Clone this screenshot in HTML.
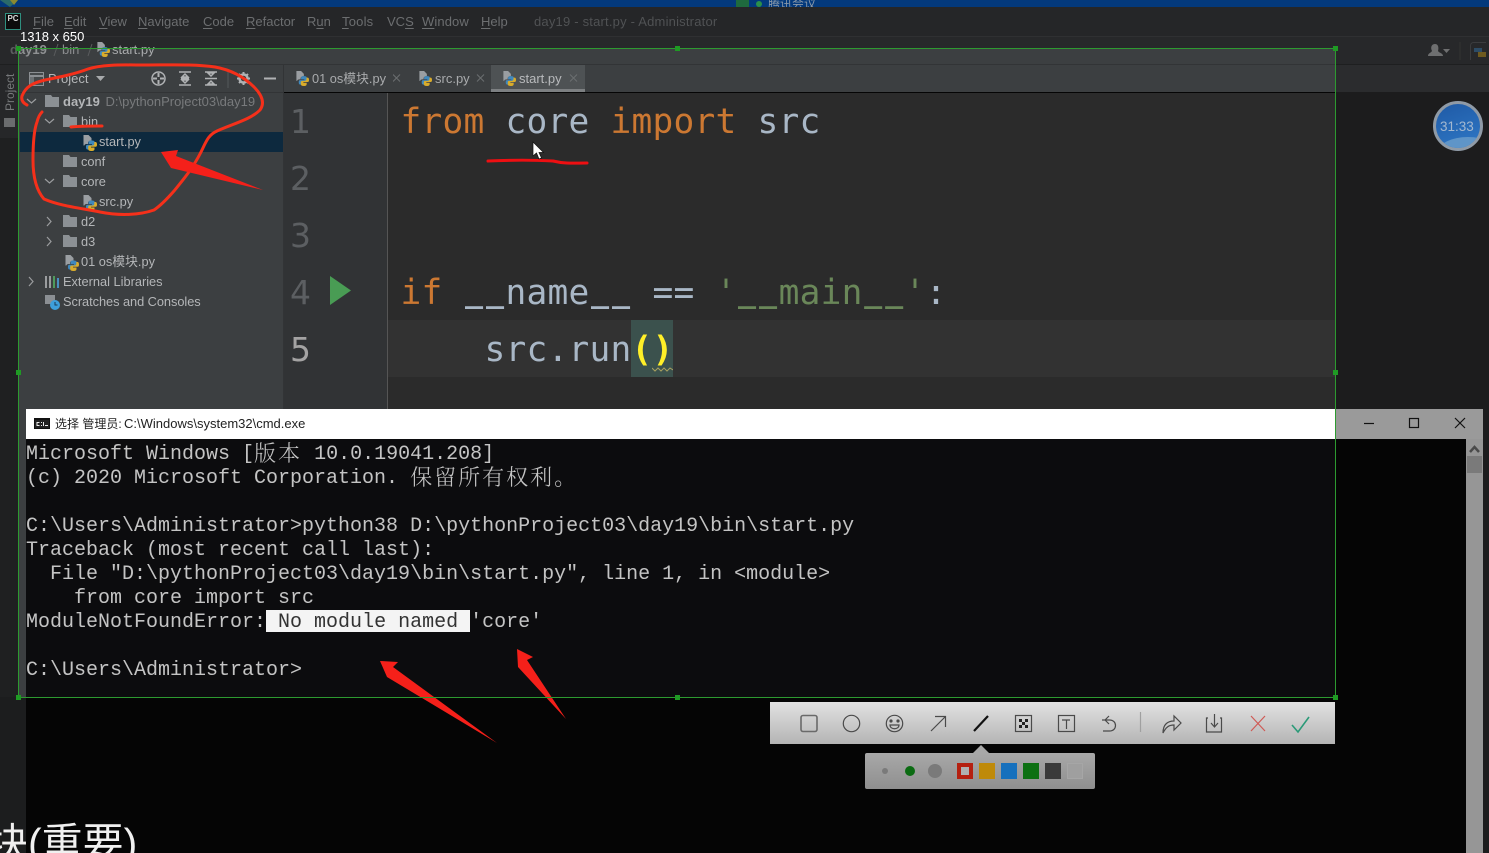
<!DOCTYPE html>
<html><head><meta charset="utf-8">
<style>
html,body{margin:0;padding:0;background:#050505;}
#r{position:relative;width:1489px;height:853px;overflow:hidden;background:#050505;font-family:"Liberation Sans","Noto Sans CJK SC",sans-serif;}
.a{position:absolute;}
.t{position:absolute;white-space:pre;}
.m{font-size:13px;color:#6c6e70;top:14px;line-height:16px;}
.m u{text-decoration-thickness:1px;text-underline-offset:2px;}
.tr{font-size:12.800px;color:#b4b6b8;line-height:20px;}
.code{font-family:"DejaVu Sans Mono","Liberation Mono",monospace;font-size:34.500px;line-height:57px;height:57px;color:#a9b7c6;letter-spacing:.23px;}
.code b{font-weight:normal;color:#cc7832;}
.code s{text-decoration:none;display:inline-block;width:21px;text-align:center;font-size:30px;line-height:1;font-weight:bold;position:relative;top:-2px;letter-spacing:0;}
.ln{font-family:"DejaVu Sans",sans-serif;font-size:33px;line-height:57px;color:#5c5f62;left:290px;}
.c{font-family:"Liberation Mono","Noto Serif CJK SC",monospace;font-size:20px;line-height:24px;height:24px;color:#c4c4c4;left:26px;}
.c i{font-style:normal;font-family:"Noto Serif CJK SC",serif;font-size:22px;letter-spacing:2px;line-height:0;font-weight:300;position:relative;top:2px;}
.h{position:absolute;width:5px;height:5px;background:#1f9a24;}
.sq{position:absolute;top:763px;width:16px;height:16px;}
</style></head><body><div id="r">
<svg width="0" height="0" style="position:absolute"><defs>
<symbol id="py" viewBox="0 0 15 16"><path d="M1.500 0h5l3 3v2.500c-2 0-3.500 1-3.500 2.500v1H4.500c-1 0-1.800.5-2.200 1.500H1.500z" fill="#9a9ea2"/><path d="M9.500 5.500c-2.200 0-3 .7-3 2v1.500H10v.7H5.500C4.200 9.700 4 10.700 4 12c0 1.500.5 2.500 1.500 2.500h1.200v-1.700c0-1 .8-1.800 1.800-1.800h3c.8 0 1.300-.6 1.300-1.300V7.500c0-1.300-1-2-3-2z" fill="#3f88bd"/><path d="M9.500 16c2.200 0 3-.7 3-2v-1.500H9v-.7h4.500c1.300 0 1.500-1 1.500-2.300 0-1.500-.5-2.500-1.500-2.500h-1.200v1.700c0 1-.8 1.800-1.800 1.800h-3c-.8 0-1.300.6-1.300 1.300V14c0 1.300 1 2 3 2z" fill="#d9ac2b"/></symbol>
<symbol id="fd" viewBox="0 0 14 12"><path d="M0 0h6l1.500 2H14v10H0z" fill="#8b9094"/></symbol>
</defs></svg>

<!-- top dim bars -->
<div class="a" style="left:0;top:0;width:1489px;height:7px;background:#03397c"></div>
<svg class="a" style="left:0;top:0" width="20" height="7"><path d="M0 0h18L10 7z" fill="#2a6a6a"/><path d="M10 0h8l-4 5z" fill="#8a8a30"/></svg>
<div class="a" style="left:736px;top:0;width:13px;height:7px;background:#1f6a3e"></div>
<div class="a" style="left:756px;top:1px;width:6px;height:6px;border-radius:3px;background:#2b8f4a"></div>
<div class="t" style="left:768px;top:-3px;font-size:12px;line-height:14px;color:#8a98a8">腾讯会议</div>
<div class="a" style="left:0;top:7px;width:1489px;height:29px;background:#252628"></div>
<div class="a" style="left:0;top:36px;width:1489px;height:1px;background:#2f3032"></div>
<div class="a" style="left:0;top:37px;width:1489px;height:28px;background:#27282a"></div>
<div class="a" style="left:0;top:64px;width:1489px;height:1px;background:#1e1f20"></div>
<div class="a" style="left:1335px;top:65px;width:154px;height:27px;background:#2b2c2e"></div>
<div class="a" style="left:1335px;top:92px;width:154px;height:761px;background:#1c1c1d"></div>
<div class="a" style="left:0;top:65px;width:19px;height:788px;background:#1f2021"></div>
<div class="a" style="left:0;top:65px;width:19px;height:73px;background:#262729"></div>

<!-- PC logo + menu -->
<div class="a" style="left:5px;top:13px;width:14px;height:15px;background:#0c0c0c;border:1px solid #2f8f7f;color:#d8d8d8;font:bold 8px/10px 'Liberation Sans',sans-serif;text-align:center">PC</div>
<div class="t m" style="left:33px"><u>F</u>ile</div>
<div class="t m" style="left:64px"><u>E</u>dit</div>
<div class="t m" style="left:99px"><u>V</u>iew</div>
<div class="t m" style="left:138px"><u>N</u>avigate</div>
<div class="t m" style="left:203px"><u>C</u>ode</div>
<div class="t m" style="left:246px"><u>R</u>efactor</div>
<div class="t m" style="left:307px">R<u>u</u>n</div>
<div class="t m" style="left:342px;letter-spacing:.2px"><u>T</u>ools</div>
<div class="t m" style="left:387px">VC<u>S</u></div>
<div class="t m" style="left:422px;letter-spacing:.1px"><u>W</u>indow</div>
<div class="t m" style="left:481px"><u>H</u>elp</div>
<div class="t m" style="left:534px;color:#505254;letter-spacing:.2px">day19 - start.py - Administrator</div>

<!-- right nav dim -->
<svg class="a" style="left:1426px;top:42px" width="60" height="18"><path d="M2 14c0-3 3-3 4-5-2-4 0-7 3-7s4 3 3 7c1 2 5 2 5 5z" fill="#6e6f70"/><path d="M17 7h7l-3.500 4z" fill="#6e6f70"/><path d="M34 0v18" stroke="#333" /><rect x="44.500" y="0.500" width="20" height="20" rx="3" fill="none" stroke="#3b3c3e"/><path d="M48 6h8v4h-8z" fill="#2d4c66"/><path d="M52 10h8v5h-8z" fill="#6e5a1f"/></svg>

<!-- selection content: IDE -->
<div class="a" style="left:19px;top:48px;width:1316px;height:17px;background:#3c3f41"></div>
<div class="a" style="left:19px;top:65px;width:1316px;height:27px;background:#3c3f41"></div>
<div class="a" style="left:19px;top:64px;width:1316px;height:1px;background:#323436"></div>
<div class="a" style="left:19px;top:92px;width:264px;height:317px;background:#3c3f41"></div>
<div class="a" style="left:19px;top:92px;width:264px;height:1px;background:#323436"></div>
<div class="a" style="left:19px;top:409px;width:7px;height:288px;background:#3c3f41"></div>
<div class="a" style="left:283px;top:65px;width:1px;height:344px;background:#323436"></div>
<div class="a" style="left:284px;top:93px;width:103px;height:316px;background:#313335"></div>
<div class="a" style="left:387px;top:93px;width:948px;height:316px;background:#2b2b2b"></div>
<div class="a" style="left:387px;top:93px;width:1px;height:316px;background:#555"></div>
<div class="a" style="left:388px;top:320px;width:947px;height:57px;background:#323232"></div>
<div class="a" style="left:631px;top:320px;width:42px;height:57px;background:#3b514d"></div>

<!-- breadcrumbs -->
<div class="t" style="left:10px;top:42px;font-size:13px;line-height:16px;font-weight:bold;color:#5b5d5f">d<span style="color:#8f9193">ay19</span></div>
<div class="t" style="left:62px;top:42px;font-size:13px;line-height:16px;color:#8a8c8e">bin</div>
<svg class="a" style="left:50px;top:43px" width="46" height="14"><path d="M4 13l4-12M38 13l4-12" stroke="#5a5c5e" fill="none"/></svg>
<svg class="a" style="left:96px;top:42px" width="14" height="15"><use href="#py"/></svg>
<div class="t" style="left:112px;top:42px;font-size:13px;line-height:16px;color:#a9abad">start.py</div>
<div class="t" style="left:20px;top:29px;font-size:13px;line-height:15px;color:#fff">1318 x 650</div>

<!-- left strip -->
<div class="t" style="left:3px;top:111px;font-size:12px;line-height:14px;color:#77797b;transform-origin:0 0;transform:rotate(-90deg);">Project</div>
<div class="a" style="left:4px;top:118px;width:11px;height:9px;background:#6a6c6e"></div>

<!-- project header -->
<svg class="a" style="left:29px;top:72px" width="15" height="14"><rect x=".5" y=".5" width="14" height="13" fill="#45494b" stroke="#8b8f93"/><path d="M1 4h13" stroke="#8b8f93" stroke-width="2"/><rect x="1" y="5" width="4" height="8" fill="#6d7275"/></svg>
<div class="t" style="left:48px;top:71px;font-size:13px;line-height:16px;color:#b4b6b8">Project</div>
<svg class="a" style="left:96px;top:75px" width="10" height="7"><path d="M0 1h9l-4.500 5z" fill="#a8aaac"/></svg>
<svg class="a" style="left:150px;top:70px" width="130" height="18" fill="none" stroke="#b0b2b4" stroke-width="1.500">
<circle cx="8.500" cy="8.500" r="6.500"/><path d="M8.500 3v4M8.500 10v4M3 8.500h4M10 8.500h4" stroke-width="2"/>
<path d="M29 2h12M29 15h12M35 4l-3 3h6zM35 13l-3-3h6zM31 8.500h8"/>
<path d="M55 2h12M55 15h12M61 6l-3-3h6zM61 11l-3 3h6zM55 8.500h12" />
<path d="M78 0v18" stroke="#55585a" stroke-width="1"/>
<circle cx="93.500" cy="8.500" r="4" stroke-width="2.500"/><path d="M93.500 2v2M93.500 13v2M87 8.500h2M98 8.500h2M89 4l1.500 1.500M98 4l-1.500 1.500M89 13l1.500-1.500M98 13l-1.500-1.500" stroke-width="2"/>
<path d="M114 8.500h12" stroke-width="2"/></svg>

<!-- tree -->
<div class="a" style="left:20px;top:132px;width:263px;height:20px;background:#0d293e"></div>
<svg class="a" style="left:20px;top:92px" width="60" height="220" fill="none" stroke="#9a9c9e" stroke-width="1.200">
<path d="M7 7l4.500 4 4.500-4M25 27l4.500 4 4.500-4M25 87l4.500 4 4.500-4M27 125l4 4.500-4 4.500M27 145l4 4.500-4 4.500M9 185l4 4.500-4 4.500"/></svg>
<svg class="a" style="left:45px;top:95px" width="14" height="12"><use href="#fd"/></svg>
<div class="t tr" style="left:63px;top:92px;font-weight:bold;font-size:13px">day19 <span style="font-weight:normal;color:#787a7c;font-size:13px;margin-left:2px">D:\pythonProject03\day19</span></div>
<svg class="a" style="left:63px;top:115px" width="14" height="12"><use href="#fd"/></svg>
<div class="t tr" style="left:81px;top:112px">bin</div>
<svg class="a" style="left:82px;top:135px" width="15" height="16"><use href="#py"/></svg>
<div class="t tr" style="left:99px;top:132px">start.py</div>
<svg class="a" style="left:63px;top:155px" width="14" height="12"><use href="#fd"/></svg>
<div class="t tr" style="left:81px;top:152px">conf</div>
<svg class="a" style="left:63px;top:175px" width="14" height="12"><use href="#fd"/></svg>
<div class="t tr" style="left:81px;top:172px">core</div>
<svg class="a" style="left:82px;top:195px" width="15" height="16"><use href="#py"/></svg>
<div class="t tr" style="left:99px;top:192px">src.py</div>
<svg class="a" style="left:63px;top:215px" width="14" height="12"><use href="#fd"/></svg>
<div class="t tr" style="left:81px;top:212px">d2</div>
<svg class="a" style="left:63px;top:235px" width="14" height="12"><use href="#fd"/></svg>
<div class="t tr" style="left:81px;top:232px">d3</div>
<svg class="a" style="left:64px;top:255px" width="15" height="16"><use href="#py"/></svg>
<div class="t tr" style="left:81px;top:252px">01 os模块.py</div>
<svg class="a" style="left:45px;top:276px" width="15" height="12"><path d="M1 0v12M5 0v12" stroke="#9a9c9e" stroke-width="2"/><path d="M9 0v12" stroke="#4f9a5c" stroke-width="2"/><path d="M13 2v10" stroke="#4a8fc0" stroke-width="2"/></svg>
<div class="t tr" style="left:63px;top:272px">External Libraries</div>
<svg class="a" style="left:45px;top:295px" width="16" height="16"><rect x="0" y="0" width="10" height="9" fill="#8b8f93"/><circle cx="10" cy="10" r="5" fill="#3d9fdc"/><path d="M10 7v3h2.500" stroke="#1c3a55" fill="none"/></svg>
<div class="t tr" style="left:63px;top:292px;letter-spacing:-.05px">Scratches and Consoles</div>

<!-- tabs -->
<div class="a" style="left:491px;top:65px;width:94px;height:27px;background:#4e5254"></div>
<div class="a" style="left:491px;top:89px;width:94px;height:3px;background:#7d8082"></div>
<svg class="a" style="left:295px;top:71px" width="14" height="15"><use href="#py"/></svg>
<div class="t" style="left:312px;top:71px;font-size:12.800px;line-height:16px;color:#a9abad">01 os模块.py</div>
<svg class="a" style="left:418px;top:71px" width="14" height="15"><use href="#py"/></svg>
<div class="t" style="left:435px;top:71px;font-size:13px;line-height:16px;color:#a9abad">src.py</div>
<svg class="a" style="left:502px;top:71px" width="14" height="15"><use href="#py"/></svg>
<div class="t" style="left:519px;top:71px;font-size:13px;line-height:16px;color:#b8babc">start.py</div>
<svg class="a" style="left:393px;top:74px" width="190" height="9" stroke="#6b6e70" fill="none"><path d="M0 .5l7 7M7 .5l-7 7M84 .5l7 7M91 .5l-7 7M177 .5l7 7M184 .5l-7 7"/></svg>

<!-- line numbers -->
<div class="t ln" style="top:93px">1</div>
<div class="t ln" style="top:150px">2</div>
<div class="t ln" style="top:207px">3</div>
<div class="t ln" style="top:264px">4</div>
<div class="t ln" style="top:321px;color:#a4a3a3">5</div>
<svg class="a" style="left:330px;top:276px" width="21" height="30"><path d="M0 0l21 14.500L0 29z" fill="#499c54"/></svg>

<!-- code -->
<div class="t code" style="left:400.500px;top:94px"><b>from</b> core <b>import</b> src</div>
<div class="t code" style="left:400.500px;top:265px"><b>if</b> <s>_</s><s>_</s>name<s>_</s><s>_</s> == <span style="color:#6a8759">'<s>_</s><s>_</s>main<s>_</s><s>_</s>'</span><span style="color:#a9b7c6">:</span></div>
<div class="t code" style="left:400.500px;top:322px">    src.run<span style="color:#ffef28;font-weight:bold">()</span></div>
<svg class="a" style="left:652px;top:366px" width="21" height="6"><path d="M0 2l3 3 3-3 3 3 3-3 3 3 3-3 3 2" stroke="#a8a060" fill="none"/></svg>

<!-- cmd window -->
<div class="a" style="left:26px;top:409px;width:1309px;height:30px;background:#fff"></div>
<div class="a" style="left:1335px;top:409px;width:148px;height:30px;background:#9a9a9a"></div>
<div class="a" style="left:26px;top:439px;width:1309px;height:258px;background:#0c0c0e"></div>
<div class="a" style="left:26px;top:697px;width:1440px;height:156px;background:#050505"></div>
<div class="a" style="left:1335px;top:439px;width:131px;height:414px;background:#050505"></div>
<div class="a" style="left:0;top:697px;width:26px;height:156px;background:#1c1d1e"></div>
<div class="a" style="left:1466px;top:439px;width:17px;height:414px;background:#969696"></div>
<div class="a" style="left:1467px;top:456px;width:15px;height:17px;background:#7a7a7a"></div>
<svg class="a" style="left:1469px;top:445px" width="11" height="8"><path d="M1 7l4.500-5L10 7" stroke="#4a4a4a" stroke-width="2.500" fill="none"/></svg>
<svg class="a" style="left:1360px;top:416px" width="110" height="14" stroke="#111" fill="none" stroke-width="1.200"><path d="M4 7.500h10"/><rect x="49.500" y="2.500" width="9" height="9"/><path d="M95 2l10 10M105 2L95 12"/></svg>
<svg class="a" style="left:34px;top:418px" width="16" height="11"><rect width="16" height="11" fill="#111"/><rect x="1" y="2" width="14" height="8" fill="#222"/><path d="M2.500 4h3v1h-2v2h2v1h-3zM7 4h1v1H7zM7 7h1v1H7zM9 4h1v4H9zM11 7h3v1h-3z" fill="#eee"/></svg>
<div class="t" style="left:55px;top:416px;font-size:12px;line-height:15px;color:#222;font-family:'Liberation Sans','Noto Sans CJK SC',sans-serif">选择 管理员: <span style="font-size:13px;margin-left:-1px">C:\Windows\system32\cmd.exe</span></div>

<div class="t c" style="top:443px">Microsoft Windows [<i>版本</i> 10.0.19041.208]</div>
<div class="t c" style="top:467px">(c) 2020 Microsoft Corporation. <i>保留所有权利。</i></div>
<div class="t c" style="top:515px">C:\Users\Administrator&gt;python38 D:\pythonProject03\day19\bin\start.py</div>
<div class="t c" style="top:539px">Traceback (most recent call last):</div>
<div class="t c" style="top:563px">  File "D:\pythonProject03\day19\bin\start.py", line 1, in &lt;module&gt;</div>
<div class="t c" style="top:587px">    from core import src</div>
<div class="a" style="left:266px;top:610px;width:204px;height:22px;background:#f4f4f4"></div>
<div class="t c" style="top:611px">ModuleNotFoundError:<span style="color:#333"> No module named </span>'core'</div>
<div class="t c" style="top:659px">C:\Users\Administrator&gt;</div>

<!-- bottom caption -->
<div class="t" style="left:-13px;top:817px;font-size:41px;line-height:52px;color:#f0f0f0;font-family:'Liberation Sans','Noto Sans CJK SC',sans-serif">块(重要)</div>

<!-- timer -->
<div class="a" style="left:1433px;top:101px;width:44px;height:44px;border:3px solid #8f9aa6;border-radius:50%;overflow:hidden;background:linear-gradient(160deg,#1f5aa6,#2a6fbc 70%,#2f78c8);"><div class="a" style="left:2px;top:33px;width:60px;height:30px;border-radius:50%;background:#5f95c8"></div></div>
<div class="t" style="left:1440px;top:119px;font-size:13.500px;line-height:16px;color:#a3b8d0">31:33</div>

<!-- cursor -->
<svg class="a" style="left:532px;top:141px;z-index:5" width="13" height="20"><path d="M1 1v14l3.500-3 2.500 6 2.500-1-2.500-5.500h4.500z" fill="#fff" stroke="#111" stroke-width=".7"/></svg>

<!-- annotations -->
<svg class="a" style="left:0;top:0;z-index:4" width="1489" height="853" fill="none">
<path d="M27 105C23 103 21 100 22 96C26 86 33 83 45 80C60 77 75 74 88 69C103 64 125 65 145 65C170 65 195 64 215 67C232 70 245 78 254 87C262 95 265 103 260 110C250 120 232 124 217 131C208 135 206 142 201 152C193 168 183 180 174 191C167 199 160 206 154 210C140 215 120 216 100 212C80 208 60 206 44 199C36 190 33 175 33 160C33 145 34 130 37 122C38 118 40 114 42 112" stroke="#f5301a" stroke-width="3" stroke-linecap="round"/>
<path d="M71 127C80 126 92 126 102 126" stroke="#f5301a" stroke-width="3" stroke-linecap="round"/>
<path d="M161 152L178 150L176 156L263 190L171 168Z" fill="#f5201a"/>
<path d="M488 161C510 160 535 160 553 161C565 164 575 163 587 163" stroke="#ee0f12" stroke-width="3" stroke-linecap="round"/>
<path d="M380 661L398 662L393 667L497 743L387 677Z" fill="#f5201a"/>
<path d="M517 649L533 657L527 660L566 719L518 667Z" fill="#f5201a"/>
</svg>

<!-- selection border -->
<div class="a" style="left:18px;top:48px;width:1318px;height:650px;box-sizing:border-box;border:1px solid #2d9a30;z-index:6"></div>
<div class="h" style="left:16px;top:46px;z-index:7"></div><div class="h" style="left:675px;top:46px;z-index:7"></div><div class="h" style="left:1333px;top:46px;z-index:7"></div>
<div class="h" style="left:16px;top:370px;z-index:7"></div><div class="h" style="left:1333px;top:370px;z-index:7"></div>
<div class="h" style="left:16px;top:695px;z-index:7"></div><div class="h" style="left:675px;top:695px;z-index:7"></div><div class="h" style="left:1333px;top:695px;z-index:7"></div>

<!-- toolbar -->
<div class="a" style="left:770px;top:702px;width:565px;height:42px;background:linear-gradient(#e2e2e2,#b4b4b4)"></div>
<svg class="a" style="left:770px;top:702px" width="565" height="42" fill="none" stroke="#4a4a4a" stroke-width="1.200">
<rect x="31" y="13.500" width="16" height="16" rx="2" stroke="#6a6a6a" stroke-width="1.600"/>
<circle cx="81.500" cy="21.500" r="8.200"/>
<circle cx="124.500" cy="21.500" r="8.200"/><circle cx="121" cy="19" r="1" fill="#4a4a4a"/><circle cx="128" cy="19" r="1" fill="#4a4a4a"/><path d="M120 23h9c0 5-9 5-9 0z"/>
<path d="M161 29l14-14M165 14.500h10.500v10.500"/>
<path d="M204 29l14-15" stroke="#111" stroke-width="2.200"/>
<rect x="245.500" y="13.500" width="16" height="16"/><path d="M249 17h3v3h-3zM255 17h3v3h-3zM252 20h3v3h-3zM249 23h3v3h-3zM255 23h3v3h-3z" fill="#222" stroke="none"/>
<rect x="288.500" y="13.500" width="16" height="16"/><path d="M292 18h8M296.500 18v9"/>
<path d="M335 18h-3M335 18l4-4M335 18l4 4M335 18h4.500c8 0 8 11 0 11H333"/>
<path d="M370.500 10v20" stroke="#a0a0a0"/>
<path d="M393 31c0-9 5-12 11-12v-5l7 7-7 7v-5c-5 0-8 2-11 8z"/>
<path d="M438 16h-1.500v14h15V16H450M444.500 12v13M441 21l3.500 4 3.500-4"/>
<path d="M481 14l14 15M495 14L481 29" stroke="#cf5a55"/>
<path d="M522 23l6 7 11-15" stroke="#2b9a78" stroke-width="1.600"/>
</svg>

<!-- color panel -->
<svg class="a" style="left:971px;top:744px" width="20" height="10"><path d="M2 9l8-8 8 8z" fill="#a8a8a8"/></svg>
<div class="a" style="left:865px;top:753px;width:230px;height:36px;border-radius:2px;background:linear-gradient(#a8a8a8,#8f8f8f)"></div>
<div class="a" style="left:882px;top:768px;width:6px;height:6px;border-radius:3px;background:#7a7a7a"></div>
<div class="a" style="left:905px;top:766px;width:10px;height:10px;border-radius:5px;background:#0b6b12"></div>
<div class="a" style="left:928px;top:764px;width:14px;height:14px;border-radius:7px;background:#7a7a7a"></div>
<div class="sq" style="left:957px;width:8px;height:8px;border:4px solid #b52010;background:#b0b0b0"></div>
<div class="sq" style="left:979px;background:#bf8a0a"></div>
<div class="sq" style="left:1001px;background:#1670bd"></div>
<div class="sq" style="left:1023px;background:#0d7012"></div>
<div class="sq" style="left:1045px;background:#3a3a3a"></div>
<div class="sq" style="left:1067px;width:14px;height:14px;border:1px solid #a6a6a6;background:#9f9f9f"></div>
</div></body></html>
